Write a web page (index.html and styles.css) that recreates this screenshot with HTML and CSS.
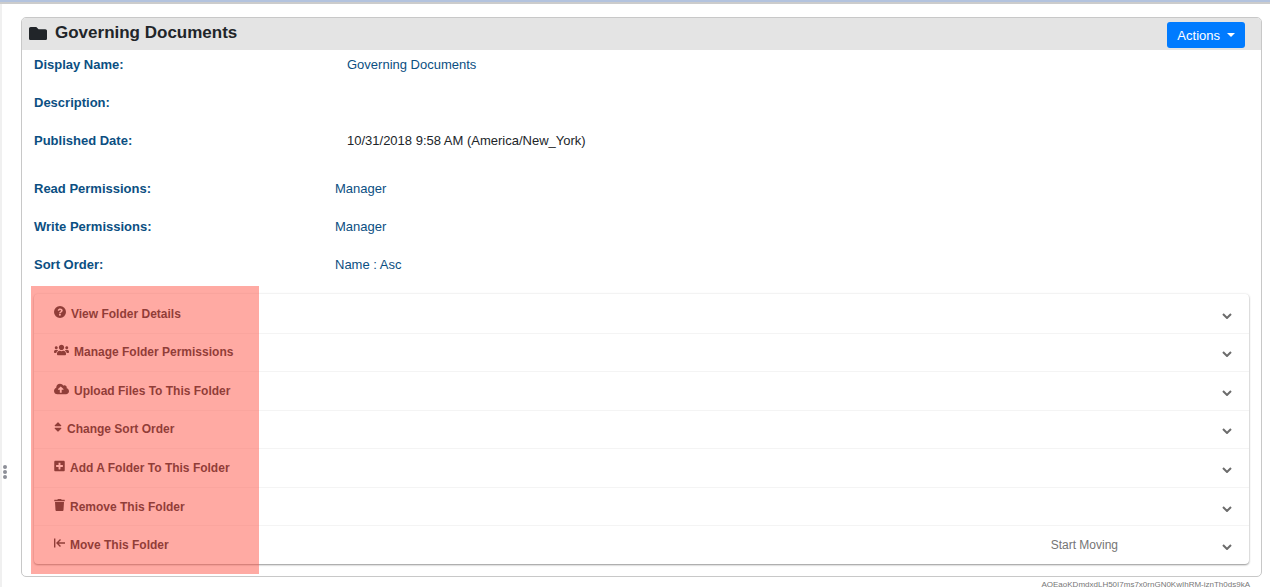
FILE: index.html
```html
<!DOCTYPE html>
<html lang="en">
<head>
<meta charset="utf-8">
<title>Governing Documents</title>
<link rel="stylesheet" href="styles.css">
</head>
<body>
<div class="topbar"></div>
<div class="workspace">
  <div class="splitter"><svg class="grip" viewBox="0 0 4 14"><circle cx="2" cy="2" r="2"/><circle cx="2" cy="7" r="2"/><circle cx="2" cy="12" r="2"/></svg></div>
  <main class="content">
    <section class="card">
      <header class="card-header">
        <svg class="folder" viewBox="0 0 512 384" preserveAspectRatio="none"><path d="M464 64H272L208 0H48C21 0 0 21 0 48v288c0 27 21 48 48 48h416c27 0 48-21 48-48V112c0-27-21-48-48-48z"/></svg>
        <h1 class="title">Governing Documents</h1>
        <button class="actions" type="button">Actions<span class="caret"></span></button>
      </header>
      <dl class="fields">
        <div class="field"><dt>Display Name:</dt><dd>Governing Documents</dd></div>
        <div class="field"><dt>Description:</dt><dd></dd></div>
        <div class="field"><dt>Published Date:</dt><dd class="date">10/31/2018 9:58 AM (America/New_York)</dd></div>
      </dl>
      <dl class="fields settings">
        <div class="field"><dt>Read Permissions:</dt><dd>Manager</dd></div>
        <div class="field"><dt>Write Permissions:</dt><dd>Manager</dd></div>
        <div class="field"><dt>Sort Order:</dt><dd>Name : Asc</dd></div>
      </dl>
      <div class="panel-area">
        <div class="accordion">
          <button class="row" type="button"><svg class="icon i12" viewBox="0 0 12 12"><path fill-rule="evenodd" d="M6 0a6 6 0 1 1 0 12A6 6 0 0 1 6 0zM3.600 4.200l1.300.8c.4-.7.7-.9 1.200-.9.5 0 .9.3.9.7 0 .5-.4.6-.9.9-.6.4-1 .8-1 1.500h1.600c0-.5.4-.6 1-1 .5-.4 1-.8 1-1.600C8.700 3.300 7.500 2.400 6.200 2.400 5 2.400 4.200 3 3.600 4.200zM5.900 7.800a1 1 0 1 0 0 2 1 1 0 0 0 0-2z"/></svg><span>View Folder Details</span><svg class="chevron" viewBox="0 0 10 6"><path d="M1 1l4 4 4-4"/></svg></button>
          <button class="row" type="button"><svg class="icon i15" viewBox="0 0 640 512"><path d="M96 224c35 0 64-29 64-64s-29-64-64-64-64 29-64 64 29 64 64 64zm448 0c35 0 64-29 64-64s-29-64-64-64-64 29-64 64 29 64 64 64zm32 32h-64c-18 0-34 7-45 18 40 22 69 62 75 110h66c18 0 32-14 32-32v-32c0-35-29-64-64-64zm-256 0c62 0 112-50 112-112S382 32 320 32 208 82 208 144s50 112 112 112zm77 32h-8c-21 10-44 16-69 16s-48-6-69-16h-8c-64 0-115 51-115 115v29c0 27 21 48 48 48h288c27 0 48-21 48-48v-29c0-64-51-115-115-115zm-224-14c-11-11-27-18-45-18H64c-35 0-64 29-64 64v32c0 18 14 32 32 32h66c6-48 35-88 75-110z"/></svg><span>Manage Folder Permissions</span><svg class="chevron" viewBox="0 0 10 6"><path d="M1 1l4 4 4-4"/></svg></button>
          <button class="row" type="button"><svg class="icon i15" viewBox="0 0 640 512"><path d="M538 227c4-11 6-23 6-35 0-53-43-96-96-96-20 0-38 6-53 16C367 64 315 32 256 32 168 32 96 104 96 192v8C40 220 0 273 0 336c0 80 64 144 144 144h368c71 0 128-57 128-128 0-62-44-114-102-125zM394 288h-66v112c0 9-7 16-16 16h-48c-9 0-16-7-16-16V288h-66c-14 0-21-17-11-27l106-106c6-6 16-6 22 0l106 106c10 10 3 27-11 27z"/></svg><span>Upload Files To This Folder</span><svg class="chevron" viewBox="0 0 10 6"><path d="M1 1l4 4 4-4"/></svg></button>
          <button class="row" type="button"><svg class="icon i8" viewBox="0 0 320 512"><path d="M41 288h238c21 0 32 26 17 41L177 448c-9 9-25 9-34 0L24 329c-15-15-4-41 17-41zm255-105L177 64c-9-9-25-9-34 0L24 183c-15 15-4 41 17 41h238c21 0 32-26 17-41z"/></svg><span>Change Sort Order</span><svg class="chevron" viewBox="0 0 10 6"><path d="M1 1l4 4 4-4"/></svg></button>
          <button class="row" type="button"><svg class="icon i11" viewBox="0 0 448 512"><path d="M400 32H48C21 32 0 53 0 80v352c0 27 21 48 48 48h352c27 0 48-21 48-48V80c0-27-21-48-48-48zm-32 252c0 7-5 12-12 12h-92v92c0 7-5 12-12 12h-56c-7 0-12-5-12-12v-92H92c-7 0-12-5-12-12v-56c0-7 5-12 12-12h92v-92c0-7 5-12 12-12h56c7 0 12 5 12 12v92h92c7 0 12 5 12 12v56z"/></svg><span>Add A Folder To This Folder</span><svg class="chevron" viewBox="0 0 10 6"><path d="M1 1l4 4 4-4"/></svg></button>
          <button class="row" type="button"><svg class="icon i11" viewBox="0 0 448 512"><path d="M432 32H312l-9-19c-4-8-12-13-21-13H166c-9 0-17 5-22 13l-8 19H16C7 32 0 39 0 48v32c0 9 7 16 16 16h416c9 0 16-7 16-16V48c0-9-7-16-16-16zM53 467c2 25 23 45 48 45h246c25 0 46-20 48-45l21-339H32z"/></svg><span>Remove This Folder</span><svg class="chevron" viewBox="0 0 10 6"><path d="M1 1l4 4 4-4"/></svg></button>
          <button class="row" type="button"><svg class="icon i11" viewBox="0 0 11 12"><path class="line" d="M.7 1.500v9M3 6h8M6.500 2.500L3 6l3.500 3.500"/></svg><span>Move This Folder</span><span class="hint">Start Moving</span><svg class="chevron" viewBox="0 0 10 6"><path d="M1 1l4 4 4-4"/></svg></button>
        </div>
        <div class="highlight"></div>
      </div>
    </section>
    <footer class="token">AQEaoKDmdxdLH50I7ms7x0rnGN0KwIhRM-iznTh0ds9kA</footer>
  </main>
</div>
</body>
</html>
```
FILE: styles.css
```css
* { box-sizing: border-box; }
body {
  margin: 0;
  height: 100vh;
  overflow: hidden;
  display: flex;
  flex-direction: column;
  background: #fff;
  color: #212529;
  font: 13px/20px "Liberation Sans", Arial, sans-serif;
}
button { font-family: inherit; border: 0; cursor: pointer; }
.topbar {
  flex: none;
  height: 4px;
  background: #b3c3de;
  border-bottom: 2px solid #ccc;
}
.workspace { flex: 1; display: flex; min-height: 0; }
.splitter {
  width: 8px;
  flex: none;
  border-left: 2px solid #f0f0f0;
  display: flex;
  align-items: flex-start;
  justify-content: center;
  padding-top: 461px;
}
.grip { width: 4px; height: 14px; fill: #8d8f98; }
.content { flex: 1; min-width: 0; padding: 13px 8px 0 13px; }
.card { border: 1px solid #c8c8c8; border-radius: 5px; }
.card-header {
  display: flex;
  align-items: center;
  height: 32px;
  padding: 0 16px 2px 7px;
  background: #e4e4e4;
  border-radius: 4px 4px 0 0;
}
.folder { width: 18px; height: 13px; margin-right: 8px; fill: #212529; }
.title { flex: 1; margin: 0; font-size: 17px; line-height: 24px; }
.actions {
  display: flex;
  align-items: center;
  gap: 7px;
  height: 26px;
  margin-top: 4px;
  padding: 0 10px;
  border-radius: 3px;
  background: #007bff;
  color: #fff;
  font-size: 13px;
}
.caret {
  border: 4px solid transparent;
  border-top-color: #fff;
  border-bottom: 0;
}
.fields { margin: 0; padding: 5px 12px 0; color: #0b4f82; }
.field { display: grid; grid-template-columns: 313px 1fr; min-height: 38px; }
.settings { padding-top: 10px; }
.settings .field { grid-template-columns: 301px 1fr; }
.field dt { font-weight: bold; }
.field dd { margin: 0; }
.field .date { color: #212529; }
.panel-area { position: relative; padding: 1px 12px 0; margin-bottom: 12px; }
.accordion {
  display: grid;
  grid-auto-rows: 1fr;
  min-height: 270px;
  border-radius: 4px;
  box-shadow: 0 1px 2px rgba(0, 0, 0, .4), 0 0 3px rgba(0, 0, 0, .08);
}
.row {
  display: flex;
  align-items: center;
  padding: 0 17px 0 20px;
  background: none;
  border-top: 1px solid #f4f4f4;
  color: #212529;
  font-size: 12px;
  font-weight: bold;
  line-height: 20px;
  text-align: left;
}
.row:first-child { border-top-color: transparent; }
.icon { height: 12px; margin: 0 5px 4px 0; fill: currentColor; }
.i8 { width: 8px; }
.i11 { width: 11px; }
.i12 { width: 12px; }
.i15 { width: 15px; }
.line { fill: none; stroke: currentColor; stroke-width: 1.4; }
.chevron {
  width: 10px;
  height: 6px;
  margin: 4px 0 0 auto;
  fill: none;
  stroke: #6c6c6c;
  stroke-width: 2;
}
.hint {
  margin-left: auto;
  margin-right: 104px;
  color: #757575;
  font-weight: normal;
}
.hint + .chevron { margin-left: 0; }
.highlight {
  position: absolute;
  top: -7px;
  bottom: -10px;
  left: 9px;
  width: 228px;
  background: rgba(255, 85, 71, .5);
  pointer-events: none;
}
.token {
  padding: 3px 12px 0 0;
  color: #777;
  font-size: 8px;
  line-height: 10px;
  text-align: right;
}
```
